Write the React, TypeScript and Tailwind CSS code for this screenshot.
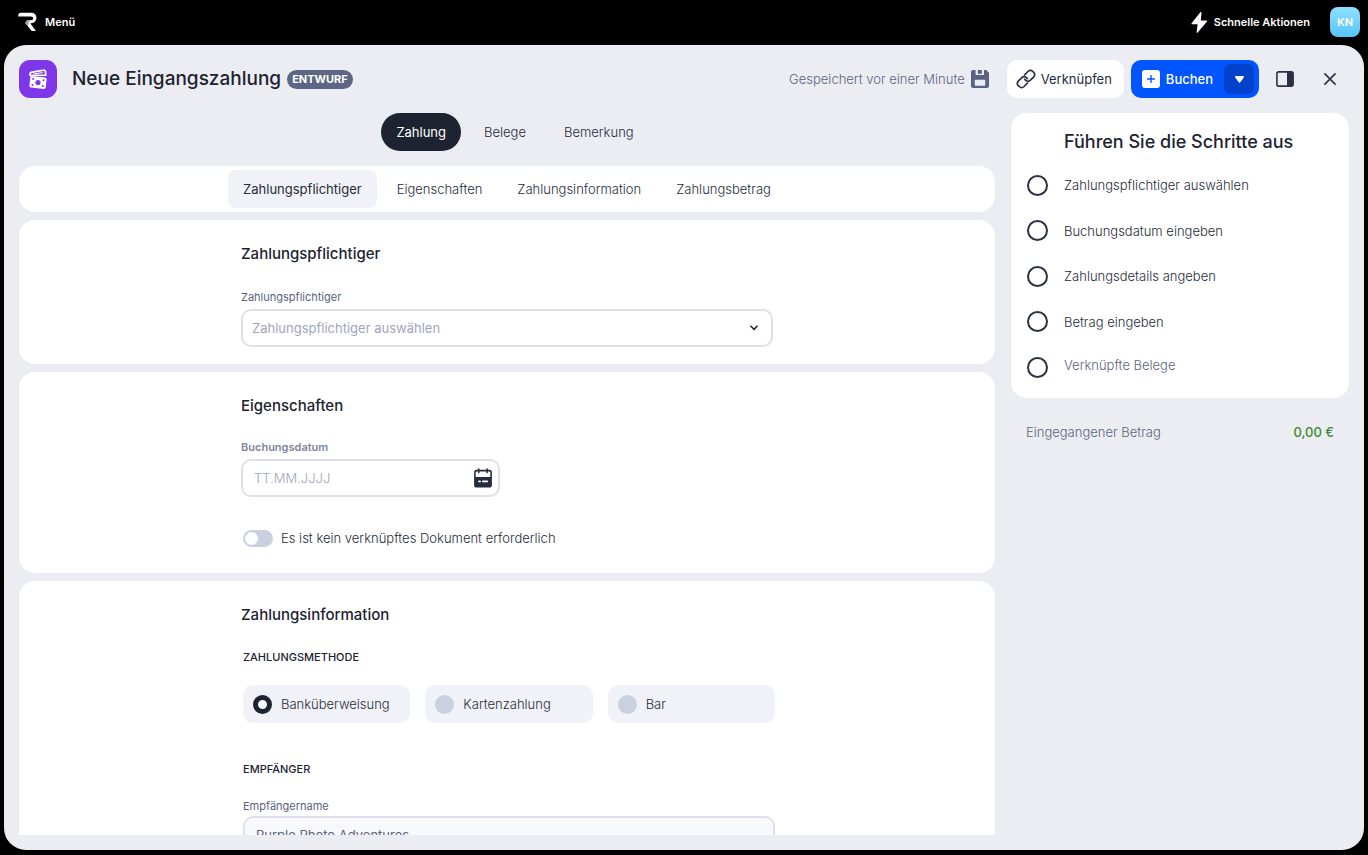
import React, { useState } from 'react';

const tabs = ['Zahlung', 'Belege', 'Bemerkung'];

const sections = [
  { id: 'zahlungspflichtiger', label: 'Zahlungspflichtiger' },
  { id: 'eigenschaften', label: 'Eigenschaften' },
  { id: 'zahlungsinformation', label: 'Zahlungsinformation' },
  { id: 'zahlungsbetrag', label: 'Zahlungsbetrag' },
];

const steps = [
  { label: 'Zahlungspflichtiger auswählen' },
  { label: 'Buchungsdatum eingeben' },
  { label: 'Zahlungsdetails angeben' },
  { label: 'Betrag eingeben' },
  { label: 'Verknüpfte Belege', optional: true },
];

const methods = ['Banküberweisung', 'Kartenzahlung', 'Bar'];

const LogoIcon = () => (
  <svg width="19" height="20" viewBox="0 0 19 20" fill="none" aria-hidden="true">
    <path d="M0.2 4.4C0 2.2 1 0.8 3.2 0.8H13C16.4 0.8 18.4 2.8 18.4 5.8C18.4 9 16.4 11 13 11.2H12.2L18 19H13.8L7.2 11L9.2 8.2H12.6C14.4 8.2 15.2 7.2 15.2 6.2C15.2 5.1 14.4 4.4 12.6 4.4H0.2Z" fill="white" />
    <path d="M7.2 11L9.2 8.2H11.6L9.6 13.8Z" fill="#9a9da6" />
  </svg>
);

const BoltIcon = () => (
  <svg width="17" height="21" viewBox="0 0 17 21" fill="white" aria-hidden="true">
    <path d="M9.3 0.3L0.6 11.2C0.3 11.7 0.5 12.2 1.1 12.2H6.6L5.6 20.2C5.6 20.8 6.3 21 6.7 20.5L16 9.6C16.4 9.1 16.1 8.5 15.5 8.5H9.8L10.5 0.7C10.5 0.1 9.7 -0.2 9.3 0.3Z" />
  </svg>
);

const CashIcon = () => (
  <svg width="20" height="21" viewBox="0 0 20 21" fill="none" aria-hidden="true">
    <path d="M2.2 6.6L2 5C1.9 4.1 2.4 3.5 3.2 3.3L15.6 1.2C16.6 1 17.3 1.5 17.4 2.4L17.7 6.2L2.2 6.6Z" stroke="white" strokeWidth="1.8" strokeLinejoin="round" />
    <path d="M5.6 5L14.4 3.6" stroke="white" strokeWidth="1" strokeLinecap="round" />
    <path d="M4.4 7.2L16.8 8.6C18 8.7 18.7 9.4 18.6 10.5L17.7 18.2C17.6 19.3 16.7 20 15.6 19.9L3.2 18.5C2 18.4 1.3 17.5 1.4 16.4L2.3 8.9C2.4 7.8 3.3 7.1 4.4 7.2Z" fill="white" />
    <circle cx="10" cy="13.5" r="2.6" fill="#7e37e8" />
    <circle cx="5.2" cy="10.1" r="1" fill="#7e37e8" />
    <circle cx="15.5" cy="11.3" r="1" fill="#7e37e8" />
    <circle cx="4.5" cy="15.9" r="1" fill="#7e37e8" />
    <circle cx="14.8" cy="17" r="1" fill="#7e37e8" />
  </svg>
);

const SaveIcon = () => (
  <svg width="18" height="18" viewBox="0 0 18 18" aria-hidden="true">
    <path d="M2 0H15.2L18 2.8V16C18 17.1 17.1 18 16 18H2C0.9 18 0 17.1 0 16V2C0 0.9 0.9 0 2 0Z" fill="#596381" />
    <path d="M4.6 0H13V4.4C13 4.8 12.7 5.1 12.3 5.1H5.3C4.9 5.1 4.6 4.8 4.6 4.4V0Z" fill="#ecedf3" />
    <rect x="6.8" y="0" width="4" height="3.8" fill="#596381" />
    <rect x="3.8" y="9.8" width="10.4" height="6" rx="0.8" fill="#ecedf3" />
  </svg>
);

const LinkIcon = () => (
  <svg width="20" height="20" viewBox="0 0 20 20" fill="none" stroke="#2b3143" strokeWidth="1.7" strokeLinecap="round" strokeLinejoin="round" aria-hidden="true">
    <path d="M8.6 5.8L11.9 2.5C13.4 1.1 15.4 1.1 16.8 2.5L17.5 3.2C18.9 4.6 18.9 6.6 17.5 8.1L14.4 11.2C12.9 12.6 10.9 12.6 9.5 11.2L8.6 10.3" />
    <path d="M11.4 14.2L8.1 17.5C6.6 18.9 4.6 18.9 3.2 17.5L2.5 16.8C1.1 15.4 1.1 13.4 2.5 11.9L5.6 8.8C7.1 7.4 9.1 7.4 10.5 8.8L11.4 9.7" />
  </svg>
);

const PlusBoxIcon = () => (
  <svg width="18" height="18" viewBox="0 0 18 18" aria-hidden="true">
    <rect width="18" height="18" rx="3" fill="white" />
    <path d="M9 5.6V12.4M5.6 9H12.4" stroke="#0055ff" strokeWidth="1.4" strokeLinecap="round" />
  </svg>
);

const CaretIcon = () => (
  <svg width="9" height="7" viewBox="0 0 9 7" fill="white" aria-hidden="true">
    <path d="M1 0H8C8.8 0 9.2 0.7 8.8 1.4L5.3 6.3C4.9 6.9 4.1 6.9 3.7 6.3L0.2 1.4C-0.2 0.7 0.2 0 1 0Z" />
  </svg>
);

const PanelIcon = () => (
  <svg width="18" height="16" viewBox="0 0 18 16" aria-hidden="true">
    <rect x="0.9" y="0.9" width="16.2" height="14.2" rx="1.8" fill="none" stroke="#2b3143" strokeWidth="1.6" />
    <path d="M11 1H16C16.6 1 17.2 1.5 17.2 2V14C17.2 14.5 16.6 15 16 15H11Z" fill="#2b3143" />
  </svg>
);

const CloseIcon = () => (
  <svg width="12" height="12" viewBox="0 0 12 12" stroke="#2b3143" strokeWidth="1.6" strokeLinecap="round" aria-hidden="true">
    <path d="M0.9 0.9L11.1 11.1M11.1 0.9L0.9 11.1" />
  </svg>
);

const CalendarIcon = () => (
  <svg width="18" height="20" viewBox="0 0 18 20" aria-hidden="true">
    <path d="M4.7 1V4.6M13.1 1V4.6" stroke="#262c40" strokeWidth="1.6" strokeLinecap="round" />
    <rect x="0.9" y="2.6" width="16.2" height="16.2" rx="1.8" fill="none" stroke="#262c40" strokeWidth="1.6" />
    <path d="M0.9 9H17.1V17C17.1 18.2 16.6 18.8 15.4 18.8H2.6C1.4 18.8 0.9 18.2 0.9 17Z" fill="#262c40" />
    <path d="M5 13.4H6M8.8 13.4H13.2" stroke="white" strokeWidth="1.8" strokeLinecap="round" />
  </svg>
);

const ChevronIcon = () => (
  <svg width="8" height="6" viewBox="0 0 8 6" fill="none" stroke="#262c40" strokeWidth="1.6" strokeLinecap="round" strokeLinejoin="round" aria-hidden="true">
    <path d="M1 1.2L4 4.4L7 1.2" />
  </svg>
);

const Section = ({ id, title, children }: { id: string; title: string; children: React.ReactNode }) => (
  <section id={id} className="shrink-0 rounded-2xl bg-white px-4 pt-6">
    <div className="mx-auto max-w-[532px]">
      <h2 className="text-[15px] leading-5 font-medium text-[#1d2330]">{title}</h2>
      {children}
    </div>
  </section>
);

const App = () => {
  const [tab, setTab] = useState('Zahlung');
  const [method, setMethod] = useState('Banküberweisung');

  return (
    <div className="flex h-screen flex-col bg-black font-['Inter',sans-serif] text-[13px] leading-5 font-light text-[#262c3a]">
      <header className="flex h-11 shrink-0 items-center justify-between pr-2 pl-[18px] text-[11px] font-semibold text-white">
        <button className="flex items-center gap-2">
          <LogoIcon />
          Menü
        </button>
        <div className="flex items-center gap-5">
          <button className="flex items-center gap-[6px]">
            <BoltIcon />
            Schnelle Aktionen
          </button>
          <button className="size-[30px] rounded-lg bg-linear-to-b from-[#8fe0ff] to-[#55c4fb]">KN</button>
        </div>
      </header>

      <div className="mx-1 mt-px mb-[5px] flex min-h-0 flex-1 flex-col gap-[15px] rounded-[22px] bg-[#ecedf3] p-[15px]">
        <div className="flex items-center justify-between">
          <div className="flex items-center">
            <div className="flex size-[38px] items-center justify-center rounded-[11px] bg-[#7e37e8]">
              <CashIcon />
            </div>
            <h1 className="ml-[15px] text-[19px] leading-6 font-medium text-[#1d2330]">Neue Eingangszahlung</h1>
            <span className="ml-[6px] rounded-full bg-[#5d6785] px-[5px] text-[11px] leading-[19px] font-bold text-white">ENTWURF</span>
          </div>
          <div className="flex items-center gap-[7px]">
            <p className="mr-[11px] flex items-center gap-[6px] text-[#5d6380]">
              Gespeichert vor einer Minute
              <SaveIcon />
            </p>
            <button className="flex h-[38px] items-center gap-[5px] rounded-[10px] bg-white pr-3 pl-[9px] font-normal">
              <LinkIcon />
              Verknüpfen
            </button>
            <div className="flex h-[38px] items-center rounded-[10px] bg-[#0055ff] pr-[5px] font-medium text-white">
              <button className="flex h-full items-center gap-[6px] pr-[11px] pl-[11px]">
                <PlusBoxIcon />
                Buchen
              </button>
              <button aria-label="Weitere Optionen" className="flex size-[30px] items-center justify-center rounded-md bg-[#0042cc]">
                <CaretIcon />
              </button>
            </div>
            <button aria-label="Seitenleiste" className="flex size-[38px] items-center justify-center">
              <PanelIcon />
            </button>
            <button aria-label="Schließen" className="flex size-[38px] items-center justify-center">
              <CloseIcon />
            </button>
          </div>
        </div>

        <div className="flex min-h-0 flex-1 gap-4">
          <main className="flex min-w-0 flex-1 flex-col gap-[15px]">
            <div className="flex shrink-0 justify-center gap-2 pl-4">
              {tabs.map((name) => (
                <button
                  key={name}
                  onClick={() => setTab(name)}
                  className={`h-[38px] rounded-full px-[15px] ${tab === name ? 'bg-[#1d2330] font-normal text-white' : ''}`}
                >
                  {name}
                </button>
              ))}
            </div>

            <div className="flex min-h-0 flex-1 flex-col gap-2 overflow-hidden">
              <nav className="flex shrink-0 justify-center gap-[5px] rounded-2xl bg-white py-1">
                {sections.map((section, i) => (
                  <a
                    key={section.id}
                    href={`#${section.id}`}
                    className={`flex h-[38px] items-center rounded-lg px-[15px] ${i === 0 ? 'bg-[#f1f2f7] font-normal' : ''}`}
                  >
                    {section.label}
                  </a>
                ))}
              </nav>

              <Section id="zahlungspflichtiger" title="Zahlungspflichtiger">
                <label htmlFor="payer" className="mt-[25px] block text-[11px] leading-4 font-normal text-[#596381]">
                  Zahlungspflichtiger
                </label>
                <div className="relative mt-1 mb-[17px]">
                  <select
                    id="payer"
                    defaultValue=""
                    className="h-[38px] w-full appearance-none rounded-[10px] border-2 border-[#dfe0eb] bg-white px-[9px] font-normal text-[#a0a4c0]"
                  >
                    <option value="">Zahlungspflichtiger auswählen</option>
                  </select>
                  <span className="pointer-events-none absolute inset-y-0 right-[15px] flex items-center">
                    <ChevronIcon />
                  </span>
                </div>
              </Section>

              <Section id="eigenschaften" title="Eigenschaften">
                <label htmlFor="date" className="mt-[23px] block text-[11px] leading-4 font-semibold text-[#7f859f]">
                  Buchungsdatum
                </label>
                <div className="relative mt-1 w-[259px]">
                  <input
                    id="date"
                    type="text"
                    placeholder="TT.MM.JJJJ"
                    className="h-[38px] w-full rounded-[10px] border-2 border-[#dfe0eb] bg-white px-[11px] placeholder:text-[#a0a4c0]"
                  />
                  <button aria-label="Kalender öffnen" className="absolute inset-y-0 right-2 flex items-center">
                    <CalendarIcon />
                  </button>
                </div>
                <label className="mt-[31px] mb-[25px] ml-0.5 flex items-center gap-2">
                  <input
                    type="checkbox"
                    className="relative h-[17px] w-[30px] appearance-none rounded-full bg-[#cbd0e0] before:absolute before:top-0.5 before:left-0.5 before:size-[13px] before:rounded-full before:bg-white checked:bg-[#0055ff] checked:before:left-[15px]"
                  />
                  Es ist kein verknüpftes Dokument erforderlich
                </label>
              </Section>

              <Section id="zahlungsinformation" title="Zahlungsinformation">
                <div className="-mr-0.5 ml-0.5">
                  <fieldset className="mt-6">
                    <legend className="text-[11px] leading-4 font-medium text-[#1d2330]">ZAHLUNGSMETHODE</legend>
                    <div className="mt-5 grid grid-cols-3 gap-[15px]">
                      {methods.map((name) => (
                        <label key={name} className="flex h-[38px] items-center gap-[9px] rounded-[10px] bg-[#f1f2f7] pl-[10px]">
                          <input
                            type="radio"
                            name="method"
                            checked={method === name}
                            onChange={() => setMethod(name)}
                            className="size-[19px] appearance-none rounded-full bg-[#cbd0e0] checked:border-5 checked:border-[#1d2330] checked:bg-white"
                          />
                          {name}
                        </label>
                      ))}
                    </div>
                  </fieldset>
                  <h3 className="mt-[38px] text-[11px] leading-4 font-medium text-[#1d2330]">EMPFÄNGER</h3>
                  <label htmlFor="recipient" className="mt-[21px] block text-[11px] leading-4 font-normal text-[#596381]">
                    Empfängername
                  </label>
                  <input
                    id="recipient"
                    readOnly
                    defaultValue="Purple Photo Adventures"
                    className="mt-0.5 mb-6 h-[38px] w-full rounded-[10px] border-2 border-[#dfe0eb] bg-[#f8f9fc] px-[11px] font-normal text-[#596381]"
                  />
                </div>
              </Section>
            </div>
          </main>

          <aside className="w-[338px] shrink-0">
            <div className="rounded-2xl bg-white px-4 pt-[17px] pb-[21px]">
              <h2 className="pl-[37px] text-lg leading-6 font-medium text-[#1d2330]">Führen Sie die Schritte aus</h2>
              <ol className="mt-[21px] flex h-[202px] flex-col justify-between">
                {steps.map((step) => (
                  <li key={step.label} className="flex h-5 items-center gap-4">
                    <span className="size-[21px] shrink-0 rounded-full border-2 border-[#2b3143]" />
                    <span className={step.optional ? 'pb-1 text-[#5d6380]' : ''}>{step.label}</span>
                  </li>
                ))}
              </ol>
            </div>
            <div className="mt-6 flex justify-between px-[15px] text-[#5d6380]">
              <span>Eingegangener Betrag</span>
              <span className="font-medium text-[#3c8a2c]">0,00 €</span>
            </div>
          </aside>
        </div>
      </div>
    </div>
  );
};

export default App;
